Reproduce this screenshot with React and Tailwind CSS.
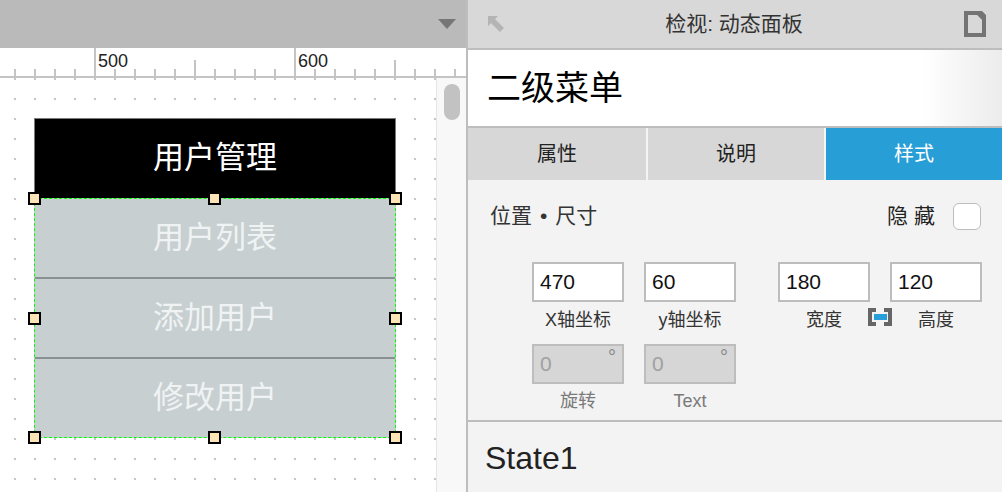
import React from 'react';

const FONT = "font-['Liberation_Sans','Noto_Sans_CJK_SC',sans-serif]";

// ruler ticks every 20px, labels at 95 (500) and 295 (600)
const Ruler = () => {
  const ticks = [];
  for (let x = 15; x < 466; x += 20) {
    const major = x === 95 || x === 295;
    const mid = x === 195 || x === 395;
    ticks.push(
      <line key={x} x1={x} x2={x} y1={major ? 0 : mid ? 12 : 21} y2={28} stroke="#b0b0b0" strokeWidth="1.5" />
    );
  }
  return (
    <div className="relative h-[30px] bg-white border-b-2 border-[#c4c4c4]">
      <svg width="466" height="28" className="absolute left-0 top-0">{ticks}</svg>
      <span className="absolute left-[98px] top-[0px] text-[18px] text-[#222]">500</span>
      <span className="absolute left-[298px] top-[0px] text-[18px] text-[#222]">600</span>
    </div>
  );
};

const Handle = ({ className }) => (
  <span className={`absolute w-[13px] h-[13px] bg-[#fbe5b7] border-2 border-black ${className}`}></span>
);

const NumBox = ({ value, label, disabled }) => (
  <div className="flex flex-col items-center w-[92px]">
    <div
      className={`relative w-[92px] h-[40px] border-2 border-[#bdbdbd] flex items-center pl-[6px] text-[21px] ${
        disabled ? 'bg-[#d6d6d6] text-[#a0a0a0]' : 'bg-white text-[#111]'
      }`}
    >
      {value}
      {disabled && <span className="absolute right-[6px] top-[-4px] text-[20px] text-[#888]">°</span>}
    </div>
    <div className={`mt-[6px] h-[24px] leading-[24px] text-[18px] ${disabled ? 'text-[#7a7a7a]' : 'text-[#333]'}`}>
      {label}
    </div>
  </div>
);

export default function App() {
  return (
    <div className={`flex w-[1002px] h-[492px] overflow-hidden bg-white ${FONT}`}>
      {/* left: canvas */}
      <div className="w-[466px] flex flex-col">
        <div className="h-[48px] bg-[#bababa] flex items-center justify-end pr-[10px]">
          <svg width="18" height="10" viewBox="0 0 18 10">
            <path d="M0 0 H18 L9 10 Z" fill="#767676" />
          </svg>
        </div>
        <Ruler />
        <div className="flex-1 flex">
          <div className="w-[436px] pl-[34px] pt-[40px] bg-[radial-gradient(circle,#c6c6c6_1px,transparent_1.6px)] bg-size-[20px_20px] bg-position-[5px_11px]">
            <div className="w-[362px] h-[80px] bg-black border-x border-t border-[#7a7a7a] flex items-center justify-center text-white text-[31px]">
              用户管理
            </div>
            <div className="relative w-[362px] h-[240px] bg-[#c7cfd1] border border-dashed border-[#00ff00] flex flex-col">
              {['用户列表', '添加用户', '修改用户'].map((t, i) => (
                <div
                  key={t}
                  className={`flex-1 flex items-center justify-center text-[31px] text-[#f0f3f3] ${
                    i < 2 ? 'border-b-2 border-[#899193]' : ''
                  }`}
                >
                  {t}
                </div>
              ))}
              <Handle className="left-[-7px] top-[-7px]" />
              <Handle className="left-[173px] top-[-7px]" />
              <Handle className="right-[-7px] top-[-7px]" />
              <Handle className="left-[-7px] top-[113px]" />
              <Handle className="right-[-7px] top-[113px]" />
              <Handle className="left-[-7px] bottom-[-7px]" />
              <Handle className="left-[173px] bottom-[-7px]" />
              <Handle className="right-[-7px] bottom-[-7px]" />
            </div>
          </div>
          <div className="w-[30px] bg-[#f8f8f8] border-l border-[#e6e6e6] pt-[6px] pl-[7px]">
            <div className="w-[16px] h-[36px] rounded-full bg-[#c2c2c2]"></div>
          </div>
        </div>
      </div>

      {/* right: inspector */}
      <div className="w-[536px] border-l-2 border-[#bdbdbd] flex flex-col bg-[#f3f3f3]">
        <div className="h-[50px] bg-[#d8d8d8] border-b-2 border-[#bdbdbd] flex items-center justify-between px-[20px]">
          <svg width="16" height="16" viewBox="0 0 16 16">
            <path d="M0 0 H10 L7 3 L16 12 L12 16 L3 7 L0 10 Z" fill="#b4b4b4" />
          </svg>
          <span className="text-[21px] text-[#333]">检视: 动态面板</span>
          <svg width="22" height="26" viewBox="0 0 22 26" className="mr-[-4px]">
            <path d="M2 2 H14 L20 8 V24 H2 Z" fill="none" stroke="#747474" strokeWidth="4" />
            <path d="M13 0 L22 9 V4 L18 0 Z" fill="#747474" />
          </svg>
        </div>
        <div className="h-[78px] border-b-2 border-[#bdbdbd] bg-[linear-gradient(to_right,#ffffff_85%,#ececec)] flex items-center pl-[19px] text-[34px] text-black">
          二级菜单
        </div>
        <div className="h-[52px] flex gap-[2px] bg-[#f4f4f4] text-[20px]">
          <div className="w-[178px] bg-[#d7d7d7] flex items-center justify-center text-[#222]">属性</div>
          <div className="w-[176px] bg-[#d7d7d7] flex items-center justify-center text-[#222]">说明</div>
          <div className="flex-1 bg-[#289ed6] flex items-center justify-center text-white">样式</div>
        </div>

        <div className="pt-[22px]">
          <div className="h-[28px] flex items-center justify-between pl-[22px] pr-[21px]">
            <span className="text-[21px] text-[#333]">
              位置<span className="mx-[8px]">•</span>尺寸
            </span>
            <div className="flex items-center gap-[12px]">
              <span className="text-[21px] text-[#222] tracking-[6px]">隐藏</span>
              <span className="w-[28px] h-[27px] rounded-[6px] bg-white border border-[#bdbdbd]"></span>
            </div>
          </div>

          <div className="mt-[32px] pl-[64px] flex">
            <NumBox value="470" label="X轴坐标" />
            <div className="ml-[20px]">
              <NumBox value="60" label="y轴坐标" />
            </div>
            <div className="ml-[42px]">
              <NumBox value="180" label="宽度" />
            </div>
            <div className="w-[20px] relative">
              <svg width="24" height="18" viewBox="0 0 24 18" className="absolute left-[-2px] top-[46px]">
                <path d="M8 2 H2 V16 H8" fill="none" stroke="#666" strokeWidth="4" />
                <path d="M16 2 H22 V16 H16" fill="none" stroke="#666" strokeWidth="4" />
                <rect x="6" y="6" width="13" height="6" fill="#279fd8" />
              </svg>
            </div>
            <NumBox value="120" label="高度" />
          </div>

          <div className="mt-[12px] pl-[64px] flex">
            <div className="[&>div>div:last-child]:mt-[5px]">
              <NumBox value="0" label="旋转" disabled />
            </div>
            <div className="ml-[20px] [&>div>div:last-child]:mt-[5px]">
              <NumBox value="0" label="Text" disabled />
            </div>
          </div>
        </div>

        <div className="mt-[7px] border-t-2 border-[#bdbdbd] pt-[18px] pl-[17px] text-[32px] leading-[36px] text-[#222]">
          State1
        </div>
      </div>
    </div>
  );
}
